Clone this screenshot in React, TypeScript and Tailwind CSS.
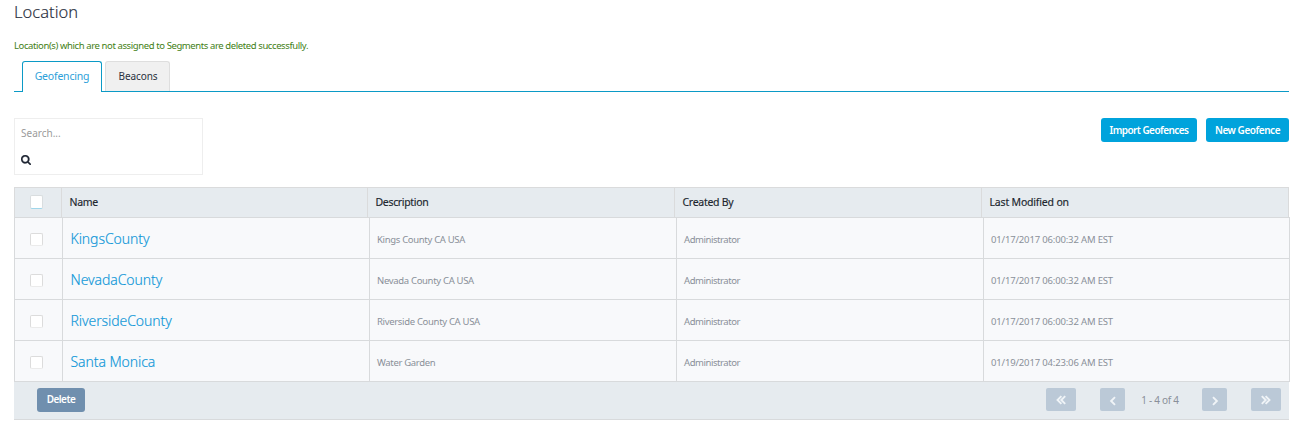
import React from "react";

const columns = [
  { label: "Name", cls: "w-[306px] pl-[7.5px] tracking-[-0.35px]" },
  { label: "Description", cls: "w-[307px] pl-[7.5px] tracking-[-0.33px]" },
  { label: "Created By", cls: "w-[307px] pl-[7.5px] tracking-[-0.28px]" },
  { label: "Last Modified on", cls: "w-[307px] pl-[7.5px] tracking-[-0.18px]" },
];

const rows = [
  { name: "KingsCounty", description: "Kings County CA USA", modified: "01/17/2017 06:00:32 AM EST" },
  { name: "NevadaCounty", description: "Nevada County CA USA", modified: "01/17/2017 06:00:32 AM EST" },
  { name: "RiversideCounty", description: "Riverside County CA USA", modified: "01/17/2017 06:00:32 AM EST" },
  { name: "Santa Monica", description: "Water Garden", modified: "01/19/2017 04:23:06 AM EST" },
];

function SearchIcon() {
  return (
    <svg viewBox="0 128 1664 1664" className="block h-[10px] w-[10px]" fill="#1f2633" stroke="#1f2633" strokeWidth="50">
      <path d="M1152 832q0-185-131.5-316.5t-316.5-131.5-316.5 131.5-131.5 316.5 131.5 316.5 316.5 131.5 316.5-131.5 131.5-316.5zm512 832q0 52-38 90t-90 38q-54 0-90-38l-343-342q-179 124-399 124-143 0-273.5-55.5t-225-150-150-225-55.5-273.5 55.5-273.5 150-225 225-150 273.5-55.5 273.5 55.5 225 150 150 225 55.5 273.5q0 220-124 399l343 343q37 37 37 90z" />
    </svg>
  );
}

function Chevrons({ double = false, right = false }: { double?: boolean; right?: boolean }) {
  return (
    <svg
      viewBox="0 0 10 10"
      className={right ? "block h-[10px] w-[10px] rotate-180" : "block h-[10px] w-[10px]"}
      fill="none"
      stroke="#f0f4f7"
      strokeWidth="1.9"
    >
      {double ? <path d="M5.4 1.1 1.5 5 5.4 8.9M9.2 1.1 5.3 5 9.2 8.9" /> : <path d="M7 1.1 3.1 5 7 8.9" />}
    </svg>
  );
}

function Checkbox({ header = false }: { header?: boolean }) {
  return (
    <span
      className={
        header
          ? "block h-[14px] w-[13px] rounded-[2px] border border-[#d9dddf] border-b-[#9fd6ea] bg-white"
          : "block h-[13px] w-[13px] rounded-[2px] border border-[#dcdcdc] border-b-[#ebebeb] bg-white"
      }
    />
  );
}

export default function App() {
  return (
    <div className="h-[428px] w-[1295px] overflow-hidden bg-white pl-[14px] font-['Noto_Sans',sans-serif] text-[#333]">
      <h1 className="h-[38px] pt-[2px] text-[16.5px] leading-5 font-light tracking-[0.02px] text-[#2a3040] [-webkit-text-stroke:0.15px_#2a3040]">
        Location
      </h1>
      <p className="h-[23px] text-[9.5px] leading-[15px] tracking-[-0.4px] whitespace-nowrap text-[#3f8015]">
        Location(s) which are not assigned to Segments are deleted successfully.
      </p>

      <div className="flex h-[31px] w-[1275px]">
        <div className="w-2 border-b border-[#0b9ac6]" />
        <div className="h-[31px] w-[80px] rounded-t-[3px] border border-b-0 border-[#0b9ac6] bg-white pt-[6px] text-center text-[10.5px] leading-4 tracking-[-0.2px] text-[#2d9fd9]">
          Geofencing
        </div>
        <div className="flex flex-1 border-b border-[#0b9ac6] pl-[3px]">
          <div className="h-[30px] w-[65px] rounded-t-[3px] border border-b-0 border-[#dedede] bg-[#f0f0f0] pt-[6px] pl-px text-center text-[10px] leading-4 tracking-[-0.1px] text-[#2a3040]">
            Beacons
          </div>
        </div>
      </div>

      <div className="mt-[26px] flex w-[1275px] items-start justify-between">
        <div className="h-[57px] w-[189px] border border-[#eeeeee] pl-[6px]">
          <div className="mt-[6px] h-[17px] text-[10px] leading-4 text-[#9b9b9b]">Search...</div>
          <div className="mt-[13px]">
            <SearchIcon />
          </div>
        </div>
        <div className="flex gap-[9px] text-[10px] leading-6 font-semibold tracking-[-0.55px] whitespace-nowrap text-white">
          <button className="h-6 w-[96px] rounded-[3px] bg-[#00a3dc]">Import Geofences</button>
          <button className="h-6 w-[83px] rounded-[3px] bg-[#00a3dc] tracking-[-0.45px]">New Geofence</button>
        </div>
      </div>

      <div className="mt-3 w-[1276px]">
        <div className="flex h-[30px] w-[1275px] border-t border-l border-[#dadbdc] bg-[#e6ebef]">
          <div className="flex w-[47px] justify-center border-r border-[#dadbdc] pt-[7px] pr-[4px]">
            <Checkbox header />
          </div>
          {columns.map((c) => (
            <div
              key={c.label}
              className={`${c.cls} border-r border-[#dadbdc] text-[10.5px] leading-[29px] whitespace-nowrap text-[#20262e] [-webkit-text-stroke:0.15px_#20262e]`}
            >
              {c.label}
            </div>
          ))}
        </div>
        <div className="border-t border-l border-[#d8dadc]">
          {rows.map((r) => (
            <div
              key={r.name}
              className="flex h-[41px] border-b border-[#d8dadc] bg-[#f8f9fb] text-[9.5px] leading-[43px] whitespace-nowrap text-[#8a9099]"
            >
              <div className="flex w-12 justify-center border-r border-[#d8dadc] pt-[15px] pr-[5px]">
                <Checkbox />
              </div>
              <div className="w-[307px] border-r border-[#d8dadc] pl-[7.5px] text-[14px] leading-[42px] font-light tracking-[-0.08px] text-[#0f97d8] [-webkit-text-stroke:0.15px_#0f97d8]">
                {r.name}
              </div>
              <div className="w-[307px] border-r border-[#d8dadc] pl-[7px] tracking-[-0.32px]">{r.description}</div>
              <div className="w-[307px] border-r border-[#d8dadc] pl-[7px] tracking-[-0.44px]">Administrator</div>
              <div className="w-[306px] border-r border-[#d8dadc] pl-[7px] tracking-[-0.16px]">{r.modified}</div>
            </div>
          ))}
        </div>
        <div className="flex h-[38px] w-[1275px] items-start border-b border-[#d8dadc] bg-[#e6ebef] pt-[6px] pl-[23px]">
          <button className="h-6 w-12 rounded-[3px] bg-[#708fae] pb-[2px] text-[10px] leading-[22px] font-semibold tracking-[-0.55px] text-white">
            Delete
          </button>
          <div className="ml-auto flex pr-2">
            <button className="flex h-[23px] w-[30px] items-center justify-center rounded-[2px] bg-[#bbc9d7] pt-px">
              <Chevrons double />
            </button>
            <button className="ml-6 flex h-[23px] w-[25px] items-center justify-center rounded-[2px] bg-[#bbc9d7] pt-[3px]">
              <Chevrons />
            </button>
            <div className="w-[77px] pr-[7px] text-center text-[10px] leading-[25px] tracking-[-0.3px] whitespace-nowrap text-[#8a9099]">
              1 - 4 of 4
            </div>
            <button className="flex h-[23px] w-[25px] items-center justify-center rounded-[2px] bg-[#bbc9d7] pt-[3px]">
              <Chevrons right />
            </button>
            <button className="ml-6 flex h-[23px] w-[30px] items-center justify-center rounded-[2px] bg-[#bbc9d7] pt-px">
              <Chevrons double right />
            </button>
          </div>
        </div>
      </div>
    </div>
  );
}
